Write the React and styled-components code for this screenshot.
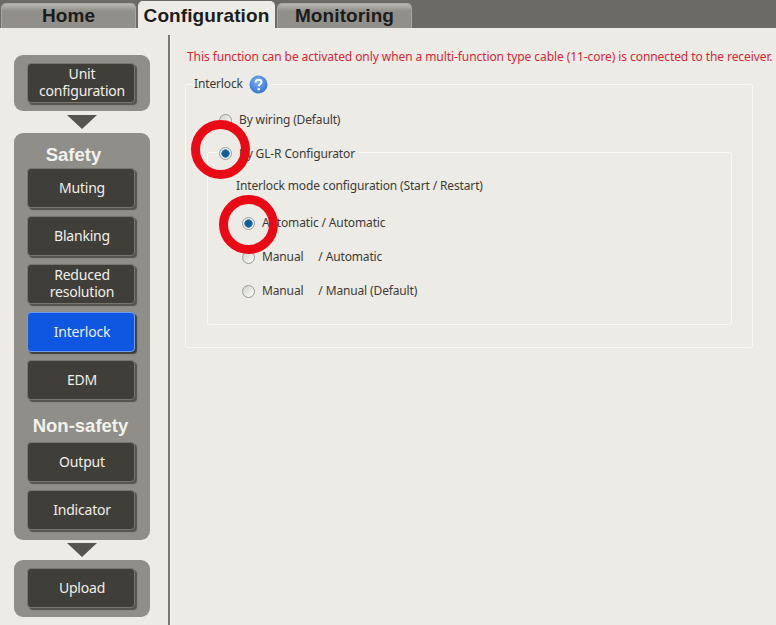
import React from "react";
import styled, { createGlobalStyle } from "styled-components";

const GlobalStyle = createGlobalStyle`
  html, body {
    margin: 0;
    padding: 0;
    background: #ecebe5;
  }
  body {
    font-family: "Noto Sans", "Liberation Sans", sans-serif;
  }
`;

const Page = styled.div`
  position: relative;
  width: 776px;
  height: 625px;
  overflow: hidden;
  background: #ecebe5;
`;

const TabBar = styled.div`
  display: flex;
  align-items: flex-end;
  gap: 2px;
  height: 28px;
  padding-left: 1px;
  background: #6b6a65;
`;

const Tab = styled.div`
  width: ${(p) => p.$w}px;
  height: ${(p) => (p.$active ? 27 : 25)}px;
  box-sizing: border-box;
  display: flex;
  align-items: center;
  justify-content: center;
  padding-top: ${(p) => (p.$active ? 2 : 0)}px;
  border-radius: 5px 5px 0 0;
  background: ${(p) =>
    p.$active ? "#ecebe5" : "linear-gradient(#b9b8b2, #8f8e89 30%, #91908b)"};
  border: 1px solid ${(p) => (p.$active ? "#ecebe5" : "#a8a7a2")};
  border-bottom: 0;
  color: #1d1c1a;
  font-family: "Liberation Sans", sans-serif;
  font-size: 19px;
  font-weight: 700;
  letter-spacing: 0.1px;
`;

const Body = styled.div`
  display: flex;
  height: 597px;
`;

const Sidebar = styled.nav`
  width: 168px;
  flex: none;
  box-sizing: border-box;
  padding: 27px 0 0 14px;
  display: flex;
  flex-direction: column;
`;

const Divider = styled.div`
  flex: none;
  width: 2px;
  margin-top: 7px;
  background: #77766f;
  border-right: 1px solid #f8f8f4;
`;

const Group = styled.div`
  width: 136px;
  box-sizing: border-box;
  padding: ${(p) => p.$pad};
  border-radius: 9px;
  background: #8f8e89;
  display: flex;
  flex-direction: column;
  align-items: flex-start;
  gap: 8px;
`;

const GroupTitle = styled.div`
  height: ${(p) => p.$h}px;
  margin-bottom: -8px;
  color: #f2f1ec;
  font-family: "Liberation Sans", sans-serif;
  font-size: 18.5px;
  font-weight: 700;
  line-height: ${(p) => p.$lh}px;
  align-self: center;
  transform: translateX(${(p) => p.$x}px);
`;

const NavButton = styled.div`
  width: 108px;
  height: 40px;
  box-sizing: border-box;
  display: flex;
  align-items: center;
  justify-content: center;
  padding: 0 0 2px 2px;
  text-align: center;
  border-radius: 4px;
  border: 1px solid ${(p) => (p.$active ? "#6f9cf0" : "#77766f")};
  background: ${(p) => (p.$active ? "#0f56e0" : "#403e39")};
  box-shadow: 2px 2px 1px ${(p) => (p.$active ? "#3f3e3a" : "#55544f")};
  color: ${(p) => (p.$active ? "#e8eefa" : "#f0efe9")};
  font-size: 14px;
  letter-spacing: -0.2px;
  line-height: 17px;
`;

const Arrow = styled.div`
  width: 0;
  height: 0;
  margin: ${(p) => p.$my}px 0 ${(p) => p.$my}px 53px;
  border-left: 15px solid transparent;
  border-right: 15px solid transparent;
  border-top: 14px solid #55544f;
`;

const Content = styled.main`
  flex: 1;
  min-width: 0;
  padding: 20px 0 0 14px;
  letter-spacing: -0.14px;
`;

const Notice = styled.div`
  height: 18px;
  margin: 0 0 9px 2px;
  color: #d62638;
  font-size: 12px;
  letter-spacing: -0.08px;
  line-height: 18px;
  white-space: nowrap;
`;

const Frame = styled.fieldset`
  box-sizing: border-box;
  width: ${(p) => p.$w}px;
  height: ${(p) => p.$h}px;
  margin: ${(p) => p.$m || 0};
  padding: 0;
  border: 1px solid #f8f8f4;
  border-radius: 2px;
  min-width: 0;
`;

const FrameLegend = styled.legend`
  display: flex;
  align-items: center;
  gap: 6px;
  height: 18px;
  margin-left: ${(p) => p.$ml}px;
  padding: 0 3px 0 0;
  color: #3c3b37;
  font-size: 12px;
  line-height: 18px;
`;

const RadioRow = styled.label`
  display: flex;
  align-items: center;
  gap: 7px;
  height: 18px;
  margin-left: ${(p) => p.$ml}px;
  margin-top: ${(p) => p.$mt || 0}px;
  color: #3c3b37;
  font-size: 12px;
  line-height: 18px;
  white-space: pre;
`;

const Radio = styled.span`
  flex: none;
  width: 13px;
  height: 13px;
  box-sizing: border-box;
  border-radius: 50%;
  border: 1px solid #9b9b98;
  background: ${(p) =>
    p.$on
      ? "radial-gradient(circle, #0f5f96 0 3px, #4a91bb 4px, #eef1f3 4.5px)"
      : "linear-gradient(135deg, #d2d2ce, #fbfbf9)"};
`;

const ModeTitle = styled.div`
  height: 18px;
  margin: 16px 0 0 28px;
  color: #3c3b37;
  font-size: 12px;
  line-height: 18px;
`;

const RedRing = styled.div`
  position: absolute;
  left: ${(p) => p.$x}px;
  top: ${(p) => p.$y}px;
  width: 59px;
  height: 59px;
  box-sizing: border-box;
  border: 9px solid #e90a16;
  border-radius: 50%;
`;

const HelpIcon = () => (
  <svg width="19" height="19" viewBox="0 0 19 19">
    <defs>
      <radialGradient id="helpFill" cx="45%" cy="35%" r="70%">
        <stop offset="0" stopColor="#7fb2f2" />
        <stop offset="1" stopColor="#2c6fd6" />
      </radialGradient>
    </defs>
    <circle cx="9.5" cy="9.5" r="9" fill="url(#helpFill)" />
    <path
      d="M6.6 7.4c0-1.7 1.3-2.6 2.9-2.6s3 .9 3 2.4c0 2-2.8 2-2.8 4"
      fill="none"
      stroke="#fff"
      strokeWidth="2"
    />
    <circle cx="9.7" cy="14.2" r="1.3" fill="#fff" />
  </svg>
);

export default function App() {
  return (
    <Page>
      <GlobalStyle />
      <TabBar>
        <Tab $w={135}>Home</Tab>
        <Tab $w={137} $active>
          Configuration
        </Tab>
        <Tab $w={135}>Monitoring</Tab>
      </TabBar>
      <Body>
        <Sidebar>
          <Group $pad="8px 0 8px 13px">
            <NavButton>
              Unit
              <br />
              configuration
            </NavButton>
          </Group>
          <Arrow $my={4} />
          <Group $pad="0 0 10px 13px">
            <GroupTitle $h={35} $lh={43} $x={-15}>
              Safety
            </GroupTitle>
            <NavButton>Muting</NavButton>
            <NavButton>Blanking</NavButton>
            <NavButton>
              Reduced
              <br />
              resolution
            </NavButton>
            <NavButton $active>Interlock</NavButton>
            <NavButton>EDM</NavButton>
            <GroupTitle $h={34} $lh={36} $x={-8}>
              Non-safety
            </GroupTitle>
            <NavButton>Output</NavButton>
            <NavButton>Indicator</NavButton>
          </Group>
          <Arrow $my={3} />
          <Group $pad="8px 0 9px 13px">
            <NavButton>Upload</NavButton>
          </Group>
        </Sidebar>
        <Divider />
        <Content>
          <Notice>
            This function can be activated only when a multi-function type cable
            (11-core) is connected to the receiver.
          </Notice>
          <Frame $w={568} $h={273}>
            <FrameLegend $ml={8}>
              Interlock <HelpIcon />
            </FrameLegend>
            <RadioRow $ml={33} $mt={18}>
              <Radio />
              By wiring (Default)
            </RadioRow>
            <Frame $w={525} $h={182} $m="14px 0 0 21px">
              <FrameLegend $ml={11}>
                <RadioRow $ml={0} $mt={3}>
                  <Radio $on />
                  By GL-R Configurator
                </RadioRow>
              </FrameLegend>
              <ModeTitle>Interlock mode configuration (Start / Restart)</ModeTitle>
              <RadioRow $ml={34} $mt={19}>
                <Radio $on />
                Automatic / Automatic
              </RadioRow>
              <RadioRow $ml={34} $mt={16}>
                <Radio />
                {"Manual     / Automatic"}
              </RadioRow>
              <RadioRow $ml={34} $mt={16}>
                <Radio />
                {"Manual     / Manual (Default)"}
              </RadioRow>
            </Frame>
          </Frame>
        </Content>
      </Body>
      <RedRing $x={191} $y={120} />
      <RedRing $x={219} $y={195} />
    </Page>
  );
}
